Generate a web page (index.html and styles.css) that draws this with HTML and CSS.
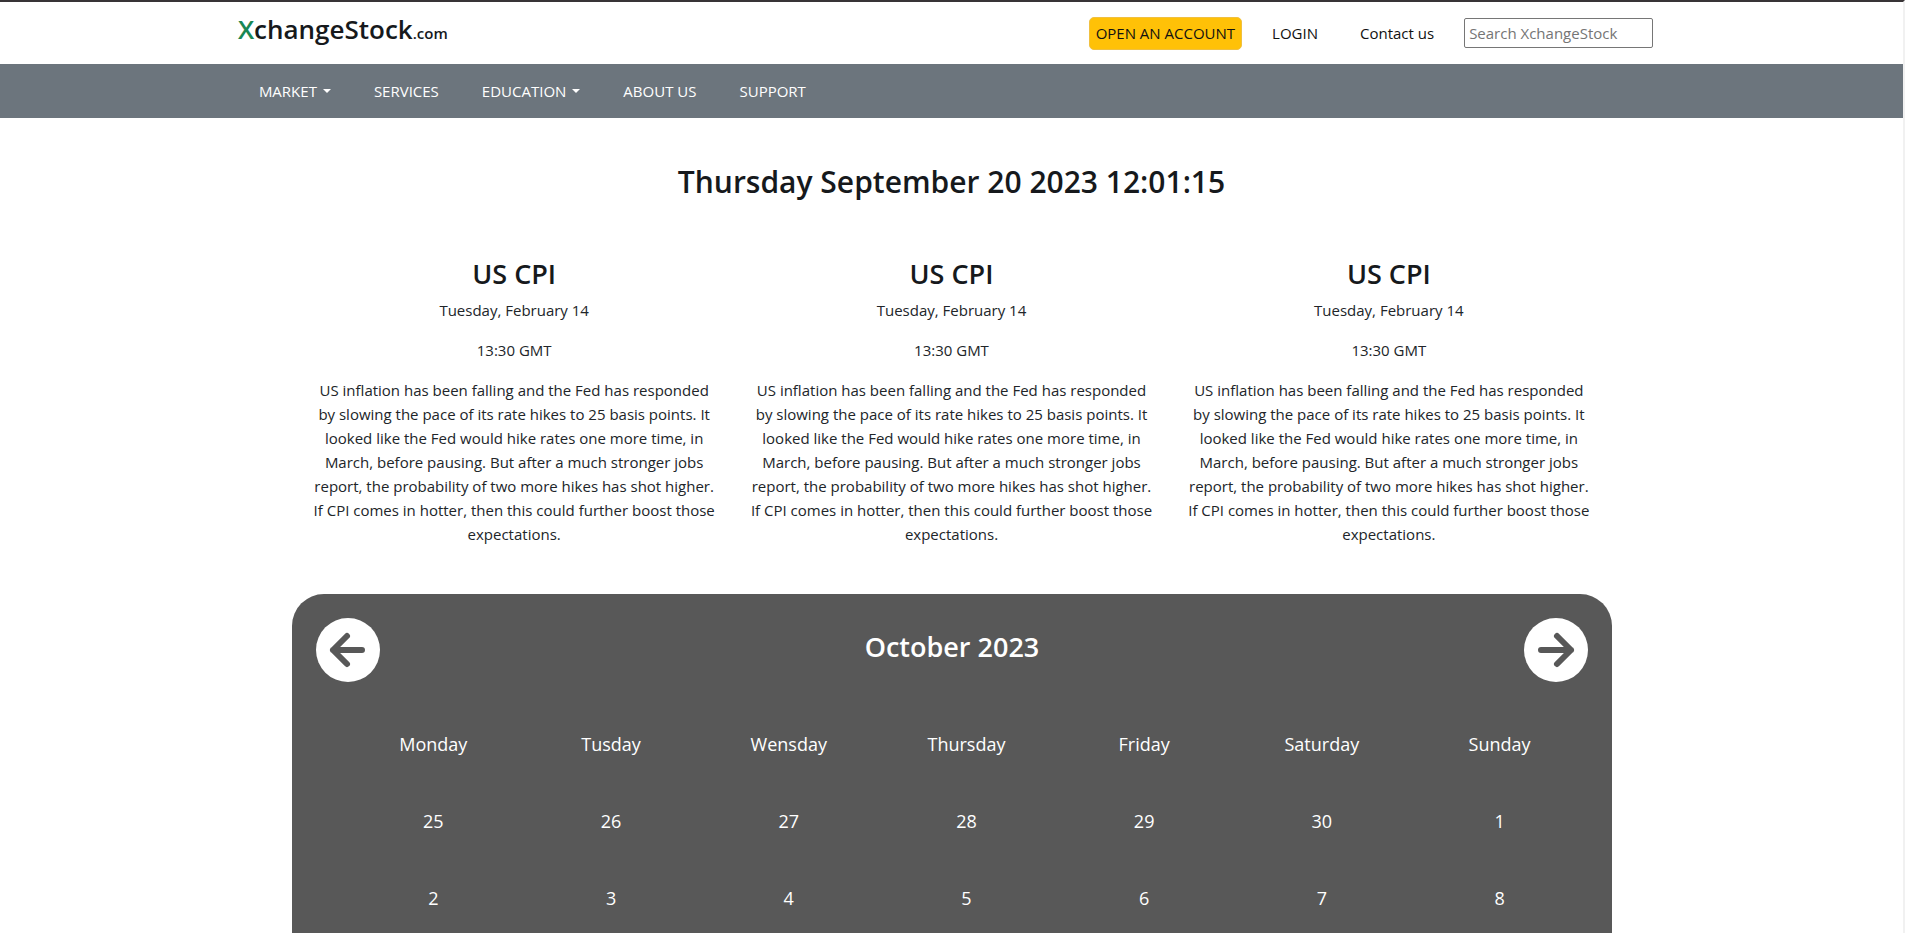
FILE: index.html
```html
<!DOCTYPE html>
<html lang="en">
<head>
<meta charset="utf-8">
<title>XchangeStock.com</title>
<meta name="viewport" content="width=device-width, initial-scale=1">
<link rel="stylesheet" href="styles.css">
</head>
<body class="page">
<header class="topbar">
  <div class="topbar-inner">
    <a class="logo" href="#"><span class="logo-x">X</span>changeStock<span class="logo-tld">.com</span></a>
    <div class="actions">
      <button class="btn-account" type="button">OPEN AN ACCOUNT</button>
      <a class="login" href="#">LOGIN</a>
      <a class="contact" href="#">Contact us</a>
      <input class="search" type="search" placeholder="Search XchangeStock" aria-label="Search XchangeStock">
    </div>
  </div>
</header>
<nav class="nav">
  <ul class="nav-list">
    <li><a class="nav-link dropdown" href="#">MARKET</a></li>
    <li><a class="nav-link" href="#">SERVICES</a></li>
    <li><a class="nav-link dropdown" href="#">EDUCATION</a></li>
    <li><a class="nav-link" href="#">ABOUT US</a></li>
    <li><a class="nav-link" href="#">SUPPORT</a></li>
  </ul>
</nav>
<main class="container">
  <h1 class="clock">Thursday September 20 2023 12:01:15</h1>
  <section class="events">
    <article class="event">
      <h2 class="event-title">US CPI</h2>
      <p>Tuesday, February 14</p>
      <p>13:30 GMT</p>
      <p>US inflation has been falling and the Fed has responded by slowing the pace of its rate hikes to 25 basis points. It looked like the Fed would hike rates one more time, in March, before pausing. But after a much stronger jobs report, the probability of two more hikes has shot higher. If CPI comes in hotter, then this could further boost those expectations.</p>
    </article>
    <article class="event">
      <h2 class="event-title">US CPI</h2>
      <p>Tuesday, February 14</p>
      <p>13:30 GMT</p>
      <p>US inflation has been falling and the Fed has responded by slowing the pace of its rate hikes to 25 basis points. It looked like the Fed would hike rates one more time, in March, before pausing. But after a much stronger jobs report, the probability of two more hikes has shot higher. If CPI comes in hotter, then this could further boost those expectations.</p>
    </article>
    <article class="event">
      <h2 class="event-title">US CPI</h2>
      <p>Tuesday, February 14</p>
      <p>13:30 GMT</p>
      <p>US inflation has been falling and the Fed has responded by slowing the pace of its rate hikes to 25 basis points. It looked like the Fed would hike rates one more time, in March, before pausing. But after a much stronger jobs report, the probability of two more hikes has shot higher. If CPI comes in hotter, then this could further boost those expectations.</p>
    </article>
  </section>
  <section class="calendar">
    <div class="calendar-head">
      <button class="arrow" type="button" aria-label="Previous month">
        <svg viewBox="0 0 64 64" width="64" height="64"><circle cx="32" cy="32" r="32" fill="#fff"/><path d="M31 18 17 32l14 14M17 32h29" fill="none" stroke="#585858" stroke-width="6" stroke-linecap="round" stroke-linejoin="round"/></svg>
      </button>
      <h2 class="month">October 2023</h2>
      <button class="arrow" type="button" aria-label="Next month">
        <svg viewBox="0 0 64 64" width="64" height="64"><circle cx="32" cy="32" r="32" fill="#fff"/><path d="M33 18l14 14-14 14M47 32H17" fill="none" stroke="#585858" stroke-width="6" stroke-linecap="round" stroke-linejoin="round"/></svg>
      </button>
    </div>
    <table class="days">
      <thead>
        <tr><th>Monday</th><th>Tusday</th><th>Wensday</th><th>Thursday</th><th>Friday</th><th>Saturday</th><th>Sunday</th></tr>
      </thead>
      <tbody>
        <tr><td>25</td><td>26</td><td>27</td><td>28</td><td>29</td><td>30</td><td>1</td></tr>
        <tr><td>2</td><td>3</td><td>4</td><td>5</td><td>6</td><td>7</td><td>8</td></tr>
      </tbody>
    </table>
  </section>
</main>
</body>
</html>
```
FILE: styles.css
```css
* { box-sizing: border-box; }

.page {
  margin: 0;
  min-height: 100vh;
  border-top: 2px solid #383436;
  border-right: 2px solid #f1f1f1;
  background: #fff;
  color: #212529;
  font-family: "Segoe UI", "Open Sans", "Noto Sans", sans-serif;
  font-size: 15px;
  line-height: 24px;
}

a { color: inherit; text-decoration: none; }

.topbar-inner,
.nav-list {
  width: 75%;
  margin: 0 auto;
  display: flex;
}

.topbar-inner {
  height: 62px;
  padding-right: 12px;
  justify-content: space-between;
  align-items: center;
}

.logo {
  margin-bottom: 4px;
  color: #16191c;
  font-size: 26px;
  font-weight: 600;
  line-height: 32px;
}
.logo-x { color: #198754; }
.logo-tld { font-size: 15px; }

.actions {
  display: flex;
  align-items: center;
  color: #111;
}
.btn-account {
  height: 33px;
  padding: 0 6px;
  border: 1px solid #f0c040;
  border-radius: 5px;
  background: #ffc107;
  color: #111;
  font: inherit;
}
.login { margin-left: 30px; }
.contact { margin-left: 42px; }
.search {
  width: 189px;
  height: 30px;
  margin-left: 30px;
  padding: 0 4px;
  border: 1px solid #767676;
  border-radius: 2px;
  font: inherit;
}
.search::placeholder { color: #757575; }

.nav { background: #6c757d; color: #fff; }
.nav-list {
  padding: 15px 21px;
  gap: 43px;
  list-style: none;
}
.nav-link { display: flex; align-items: center; }
.dropdown::after {
  content: "";
  margin-left: 6px;
  border: 4px solid transparent;
  border-top-color: currentColor;
  border-bottom: 0;
}

.container { max-width: 1320px; margin: 0 auto; }

.clock {
  margin: 44px 0 0;
  color: #16191c;
  font-size: 30px;
  font-weight: 600;
  line-height: 40px;
  text-align: center;
}

.events {
  display: grid;
  grid-template-columns: repeat(3, 1fr);
  gap: 32px;
  padding: 56px 20px 48px;
  text-align: center;
}
.event-title {
  margin: 0 0 8px;
  color: #16191c;
  font-size: 27px;
  font-weight: 600;
  line-height: 32px;
}
.event p { margin: 0 0 16px; }
.event p:last-child { margin: 0; }

.calendar {
  padding: 24px 23px 0 24px;
  border-radius: 32px 32px 0 0;
  background: #585858;
  color: #fff;
}
.calendar-head {
  display: flex;
  justify-content: space-between;
}
.arrow {
  padding: 0;
  border: 0;
  background: none;
}
.arrow svg { display: block; }
.month {
  margin: 13px 0 0;
  font-size: 27px;
  font-weight: 600;
  line-height: 32px;
}
.days {
  width: calc(100% - 29px);
  margin: 23px 0 0 29px;
  border-collapse: collapse;
  table-layout: fixed;
  font-size: 18px;
  text-align: center;
}
.days th,
.days td {
  height: 77px;
  padding: 0;
  font-weight: 400;
}
```
